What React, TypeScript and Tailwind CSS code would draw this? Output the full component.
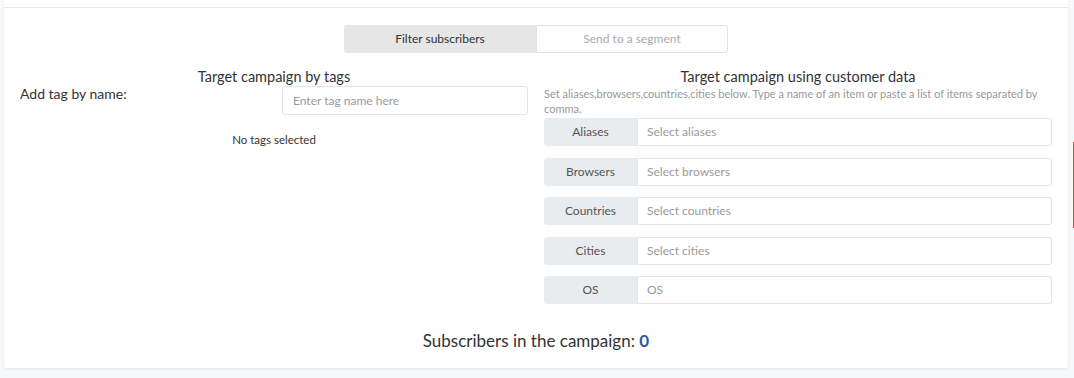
import React from 'react';

const fields = [
  { label: 'Aliases', placeholder: 'Select aliases' },
  { label: 'Browsers', placeholder: 'Select browsers' },
  { label: 'Countries', placeholder: 'Select countries' },
  { label: 'Cities', placeholder: 'Select cities' },
  { label: 'OS', placeholder: 'OS' },
];

const App: React.FC = () => {
  return (
    <div className="relative min-h-[378px] bg-[#f5f9fc] pr-[6px] pl-[4px] font-['Lato','Open_Sans',sans-serif] text-[#333]">
      <div className="rounded-b-[3px] bg-white pb-[14px] shadow-[0_1px_3px_rgba(0,0,0,0.08)]">
        <div className="h-[8px] border-b border-[#e4e8ec]" />

        {/* Mode switch */}
        <div className="mt-[17px] flex justify-center">
          <div className="flex h-[28px] text-[12px]">
            <button className="w-[192px] rounded-l-[3px] bg-[#e6e6e6] text-[#333]">Filter subscribers</button>
            <button className="w-[192px] rounded-r-[3px] border border-[#e2e2e2] bg-white text-[#aaa]">Send to a segment</button>
          </div>
        </div>

        <div className="mt-[15px] grid grid-cols-2 gap-[16px] px-[16px]">
          {/* Tags */}
          <div>
            <h3 className="text-center text-[14.5px] leading-[18px]">Target campaign by tags</h3>
            <div className="grid grid-cols-2">
              <label className="text-[14px] leading-[16px]">Add tag by name:</label>
              <input
                placeholder="Enter tag name here"
                className="ml-[8px] h-[29px] rounded-[3px] border border-[#e3e3e3] px-[10px] text-[12px] outline-none placeholder:text-[#999]"
              />
            </div>
            <p className="mt-[16px] text-center text-[11.5px]">No tags selected</p>
          </div>

          {/* Customer data */}
          <div>
            <h3 className="text-center text-[14.5px] leading-[18px]">Target campaign using customer data</h3>
            <p className="text-[11px] leading-[15px] text-[#999]">
              Set aliases,browsers,countries,cities below. Type a name of an item or paste a list of items separated by comma.
            </p>
            <div className="mt-[2px] flex flex-col gap-[11.5px]">
              {fields.map((f) => (
                <div key={f.label} className="flex h-[28px] text-[12px]">
                  <span className="flex w-[93px] items-center justify-center rounded-l-[3px] bg-[#e9ecef] text-[#555]">{f.label}</span>
                  <input
                    placeholder={f.placeholder}
                    className="flex-1 rounded-r-[3px] border border-[#e5e5e5] px-[9px] outline-none placeholder:text-[#9a9a9a]"
                  />
                </div>
              ))}
            </div>
          </div>
        </div>

        <p className="mt-[24px] text-center text-[17px]">
          Subscribers in the campaign: <span className="font-bold text-[#2e5d9c]">0</span>
        </p>
      </div>
      <div className="absolute right-0 top-[142px] h-[86px] w-[1px] bg-[#c0505f]" />
    </div>
  );
};

export default App;
